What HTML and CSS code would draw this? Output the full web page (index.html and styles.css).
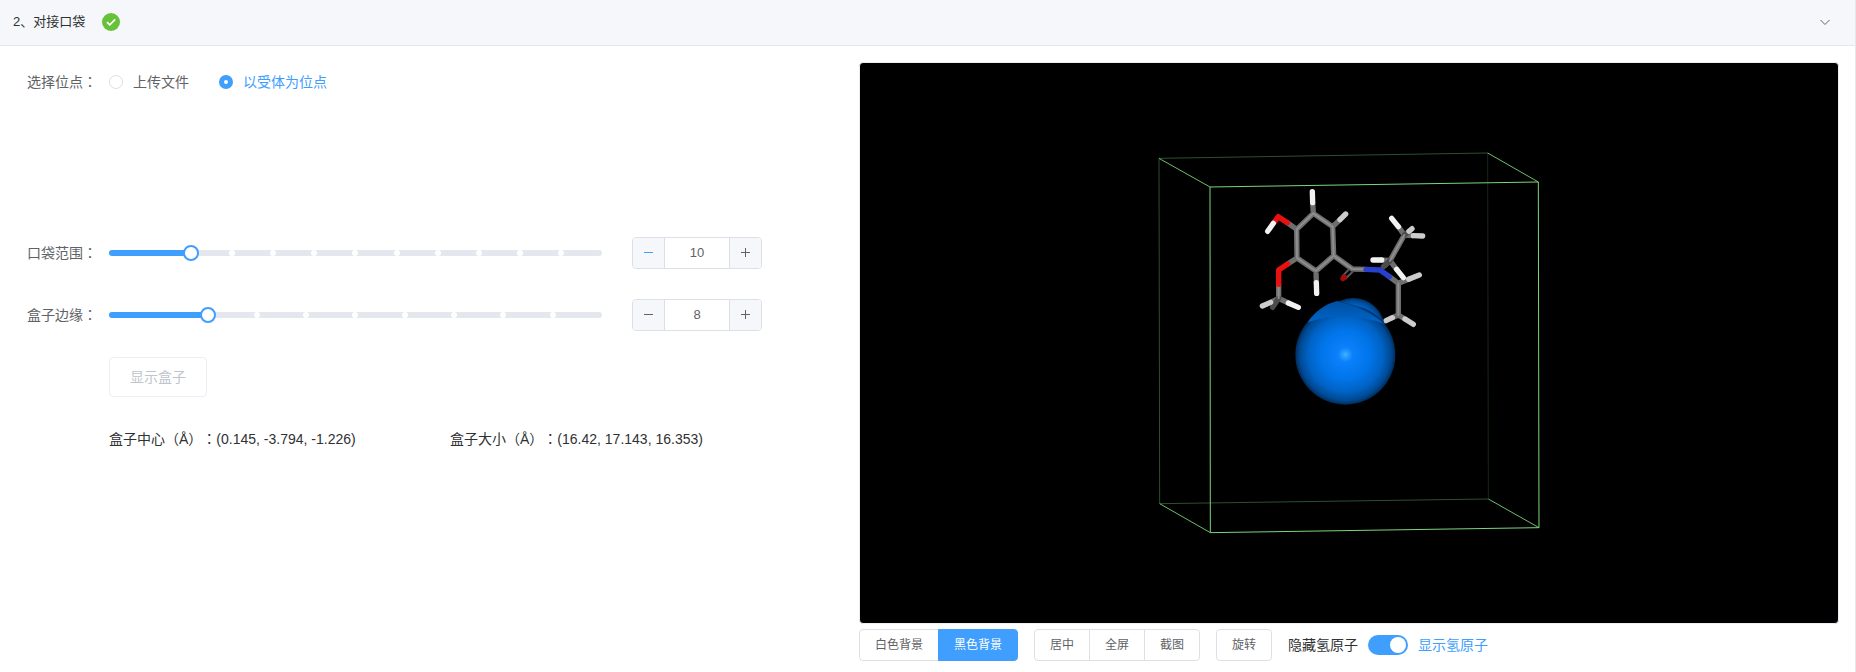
FILE: index.html
```html
<!DOCTYPE html>
<html lang="zh-CN">
<head>
<meta charset="utf-8">
<title>对接口袋</title>
<link rel="stylesheet" href="styles.css">
</head>
<body>
<section class="panel">
  <header class="panel-header">
    <h2 class="panel-title">2、对接口袋</h2>
    <svg class="icon-success" viewBox="0 0 18 18" aria-hidden="true">
      <circle cx="9" cy="9" r="9" fill="#67c23a"/>
      <path d="M5 9.2l2.8 2.7L13.2 6.4" fill="none" stroke="#fff" stroke-width="1.6"/>
    </svg>
    <button class="collapse" type="button" aria-label="收起">
      <svg viewBox="0 0 12 12" aria-hidden="true"><path d="M1.5 4L6 8.5L10.500 4" fill="none" stroke="#606266" stroke-width="1"/></svg>
    </button>
  </header>

  <div class="panel-body">
    <form class="settings">
      <div class="row row-site" role="radiogroup" aria-labelledby="site-label">
        <span class="label" id="site-label">选择位点<span class="colon" lang="zh-TW">：</span></span>
        <label class="radio"><input type="radio" name="site"><span>上传文件</span></label>
        <label class="radio"><input type="radio" name="site" checked><span>以受体为位点</span></label>
      </div>

      <div class="row">
        <label class="label" for="range">口袋范围<span class="colon" lang="zh-TW">：</span></label>
        <div class="slider">
          <div class="track"><i></i><i></i><i></i><i></i><i></i><i></i><i></i><i></i><i></i><i></i><i></i><i></i></div>
          <div class="fill" style="width:16.667%"></div>
          <input id="range" type="range" min="8" max="20" value="10">
        </div>
        <div class="number">
          <button type="button" class="active" aria-label="减少"><svg viewBox="0 0 11 12"><path d="M1 5.500h9"/></svg></button>
          <input type="text" value="10" aria-label="口袋范围">
          <button type="button" aria-label="增加"><svg viewBox="0 0 11 12"><path d="M1 5.500h9M5.500 1v9"/></svg></button>
        </div>
      </div>

      <div class="row">
        <label class="label" for="edge">盒子边缘<span class="colon" lang="zh-TW">：</span></label>
        <div class="slider">
          <div class="track"><i></i><i></i><i></i><i></i><i></i><i></i><i></i><i></i><i></i><i></i></div>
          <div class="fill" style="width:20%"></div>
          <input id="edge" type="range" min="6" max="16" value="8">
        </div>
        <div class="number">
          <button type="button" aria-label="减少"><svg viewBox="0 0 11 12"><path d="M1 5.500h9"/></svg></button>
          <input type="text" value="8" aria-label="盒子边缘">
          <button type="button" aria-label="增加"><svg viewBox="0 0 11 12"><path d="M1 5.500h9M5.500 1v9"/></svg></button>
        </div>
      </div>

      <div class="row row-indent"><button class="show-box" type="button" disabled>显示盒子</button></div>

      <div class="row row-indent summary">
        <p>盒子中心<span class="colon" lang="zh-TW">（Å）：</span>(0.145, -3.794, -1.226)</p>
        <p>盒子大小<span class="colon" lang="zh-TW">（Å）：</span>(16.42, 17.143, 16.353)</p>
      </div>
    </form>

    <div class="viewer">
      <svg class="scene" viewBox="860 63 978 560" role="img" aria-label="分子三维视图">
        <defs>
          <radialGradient id="ball">
            <stop offset="0" stop-color="#40b4ff"/>
            <stop offset=".06" stop-color="#2a9cff"/>
            <stop offset=".15" stop-color="#0a80fc"/>
            <stop offset=".5" stop-color="#0074e8"/>
            <stop offset=".75" stop-color="#0062c4"/>
            <stop offset=".92" stop-color="#004890"/>
            <stop offset="1" stop-color="#002c5c"/>
          </radialGradient>
          <linearGradient id="cap" x1="0" y1="0" x2="0" y2="1">
            <stop offset="0" stop-color="#0050a0"/>
            <stop offset="1" stop-color="#0066cc"/>
          </linearGradient>
        </defs>
        <g class="box" transform="translate(1140 140) scale(.33333)">
          <path class="edge-far" d="M1043 39L1045 1077"/>
          <path class="edge-back" d="M57 55L1043 39M59 1091L1045 1077M57 55L59 1091"/>
          <path class="edge-side" d="M57 55L210 141M1043 39L1195 126M59 1091L211 1178M1045 1077L1197 1163"/>
          <path class="edge-front" d="M210 141L1195 126L1197 1163L211 1178Z"/>
        </g>
        <g transform="translate(1240 170) scale(.33333)">
          <g class="bond carbon">
            <path d="M220 130L278 170L281 257L228 303L171 264L170 178ZM281 257L337 297L378 298M170 178L142 158M171 264L143 282M116 343V385M218 98L220 130M278 170L300 149M228 303L229 338"/>
            <path d="M493 195L450 272M475 340V435M448 320L475 340M435 286L450 272"/>
          </g>
          <path class="bond carbon" d="M493 195L475 170M493 195L520 197M450 272L425 270M450 272L470 298M475 340L506 328M116 385L92 397M116 385L145 399M475 435L457 443M475 435L495 447"/>
          <path class="bond shade" d="M116 385L98 412M493 195L507 184M450 272L430 290"/>
          <path class="bond-core carbon" d="M220 130L278 170L281 257L228 303L171 264L170 178ZM281 257L337 297L378 298M116 343V385M493 195L450 272M475 340V435"/>
          <path class="bond oxygen" d="M142 158L115 140L100 160M143 282L116 300V343"/>
          <path class="double" d="M328 297L306 320M340 303L316 327"/>
          <path class="bond dark-oxygen" d="M309 326L313 321"/>
          <path class="bond nitrogen" d="M378 298L420 300L448 320"/>
          <path class="bond hydrogen" d="M217 65L218 98M230 370L229 338M83 184L100 160M145 399L175 412M455 145L475 170M399 270L425 270M490 323L470 298"/>
          <path class="bond hydrogen-dim" d="M317 132L300 149M67 408L92 397M516 176L507 184M548 198L520 197M538 315L506 328M438 452L457 443M520 463L495 447"/>
          <ellipse cx="340" cy="476" rx="94" ry="92" fill="url(#ball)"/>
          <circle cx="316" cy="554" r="150" fill="url(#ball)"/>
          <path d="M203 457C225 424 256 402 290 394C340 402 392 424 434 462Q320 418 203 457Z" fill="url(#cap)"/>
          <path d="M290 394C340 402 392 424 434 462" fill="none" stroke="#004488" stroke-width="3"/>
        </g>
      </svg>
      <div class="toolbar">
        <div class="group">
          <button type="button">白色背景</button><button type="button" class="primary">黑色背景</button>
        </div>
        <div class="group">
          <button type="button">居中</button><button type="button">全屏</button><button type="button">截图</button>
        </div>
        <div class="group"><button type="button">旋转</button></div>
        <label class="switch">
          <span>隐藏氢原子</span>
          <input type="checkbox" role="switch" checked>
          <span class="on">显示氢原子</span>
        </label>
      </div>
    </div>
  </div>
</section>
</body>
</html>
```
FILE: styles.css
```css
* { box-sizing: border-box; }

body {
  margin: 0;
  background: #fff;
  color: #303133;
  font: 14px/20px "Liberation Sans", "Noto Sans CJK SC", sans-serif;
  text-spacing-trim: space-all;
}

button, input { font: inherit; margin: 0; }
h2, p { margin: 0; }

.panel { min-height: 100vh; border-right: 1px solid #e4e7ed; }

.panel-header {
  display: flex;
  align-items: center;
  height: 46px;
  padding: 0 24px 2px 13px;
  background: #f5f7fa;
  border-bottom: 1px solid #e4e7ed;
}
.panel-title { font-size: 13px; font-weight: 400; }
.icon-success { width: 18px; height: 18px; margin-left: 17px; }
.collapse { margin-left: auto; padding: 0; border: 0; background: none; display: flex; }
.collapse svg { width: 12px; height: 12px; }

.panel-body {
  display: grid;
  grid-template-columns: 832fr 980fr;
  padding: 16px 16px 11px 27px;
}

.settings { display: flex; flex-direction: column; gap: 22px; padding-right: 97px; }
.row { display: flex; align-items: center; height: 40px; }
.row-site { margin-bottom: 109px; }
.row-indent { padding-left: 82px; }
.label { flex: none; width: 82px; color: #606266; }
.colon { font-family: "Liberation Sans", "Noto Sans CJK TC", sans-serif; }

.radio { display: flex; align-items: center; gap: 10px; margin-right: 30px; color: #606266; }
.radio input {
  appearance: none;
  width: 14px;
  height: 14px;
  border: 1px solid #dcdfe6;
  border-radius: 50%;
  background: #fff;
}
.radio input:checked { border: 5px solid #409eff; }
.radio input:checked + span { color: #409eff; }

.slider { position: relative; flex: 1; height: 6px; }
.track { display: flex; height: 6px; border-radius: 3px; background: #e4e7ed; }
.track i { position: relative; flex: 1; }
.track i:not(:last-child)::after {
  content: "";
  position: absolute;
  top: 0;
  right: -3px;
  width: 6px;
  height: 6px;
  border-radius: 50%;
  background: #fff;
}
.fill { position: absolute; top: 0; left: 0; height: 6px; border-radius: 3px 0 0 3px; background: #409eff; }
.slider input {
  appearance: none;
  position: absolute;
  top: -5px;
  left: -8px;
  width: calc(100% + 16px);
  height: 16px;
  background: transparent;
}
.slider input::-webkit-slider-thumb {
  appearance: none;
  width: 16px;
  height: 16px;
  border: 2px solid #409eff;
  border-radius: 50%;
  background: #fff;
}

.number {
  display: flex;
  width: 130px;
  height: 32px;
  margin-left: 30px;
  overflow: hidden;
  border: 1px solid #dcdfe6;
  border-radius: 4px;
  font-size: 13px;
}
.number button {
  display: flex;
  align-items: center;
  justify-content: center;
  width: 31px;
  padding: 0;
  border: 0;
  background: #f5f7fa;
}
.number svg { width: 11px; height: 12px; fill: none; stroke: #606266; }
.number .active svg { stroke: #409eff; }
.number input {
  flex: 1;
  min-width: 0;
  padding: 0;
  border: 1px solid #dcdfe6;
  border-width: 0 1px;
  color: #606266;
  text-align: center;
}

.show-box {
  height: 40px;
  padding: 0 20px;
  border: 1px solid #ebeef5;
  border-radius: 4px;
  background: #fff;
  color: #c0c4cc;
}

.summary { display: grid; grid-template-columns: 1fr 1fr; margin-right: -29px; }

.scene {
  display: block;
  width: 100%;
  border: 1px solid #ebeef5;
  border-radius: 4px;
  background: #000;
}
.box path { fill: none; stroke-width: 3; }
.box .edge-front { stroke: #7cd67c; }
.box .edge-side { stroke: #6cc06c; }
.box .edge-back { stroke: #2c502e; }
.box .edge-far { stroke: #162814; }

.bond { fill: none; stroke-width: 16; stroke-linecap: round; stroke-linejoin: round; }
.bond-core { fill: none; stroke-width: 6; stroke-linecap: round; }
.bond.carbon { stroke: #6e6e6e; }
.bond-core.carbon { stroke: #8e8e8e; }
.bond.shade { stroke: #4c4c4c; }
.oxygen { stroke: #e81010; }
.dark-oxygen { stroke: #a00c0c; }
.nitrogen { stroke: #2840cc; }
.hydrogen { stroke: #f2f2f2; }
.hydrogen-dim { stroke: #cccccc; }
.double { fill: none; stroke: #585858; stroke-width: 6; }

.toolbar { display: flex; align-items: center; gap: 16px; margin-top: 5px; }
.group { display: flex; }
.group button {
  height: 32px;
  padding: 0 15px;
  border: 1px solid #dcdfe6;
  background: #fff;
  color: #606266;
  font-size: 12px;
}
.group button + button { margin-left: -1px; }
.group button:first-child { border-radius: 4px 0 0 4px; }
.group button:last-child { border-radius: 0 4px 4px 0; }
.group button:only-child { border-radius: 4px; }
.group .primary { border-color: #409eff; background: #409eff; color: #fff; }

.switch { display: flex; align-items: center; gap: 10px; }
.switch input {
  appearance: none;
  display: flex;
  justify-content: flex-end;
  width: 40px;
  height: 20px;
  padding: 2px;
  border-radius: 10px;
  background: #409eff;
}
.switch input::before { content: ""; width: 16px; height: 16px; border-radius: 50%; background: #fff; }
.on { color: #409eff; }
```
